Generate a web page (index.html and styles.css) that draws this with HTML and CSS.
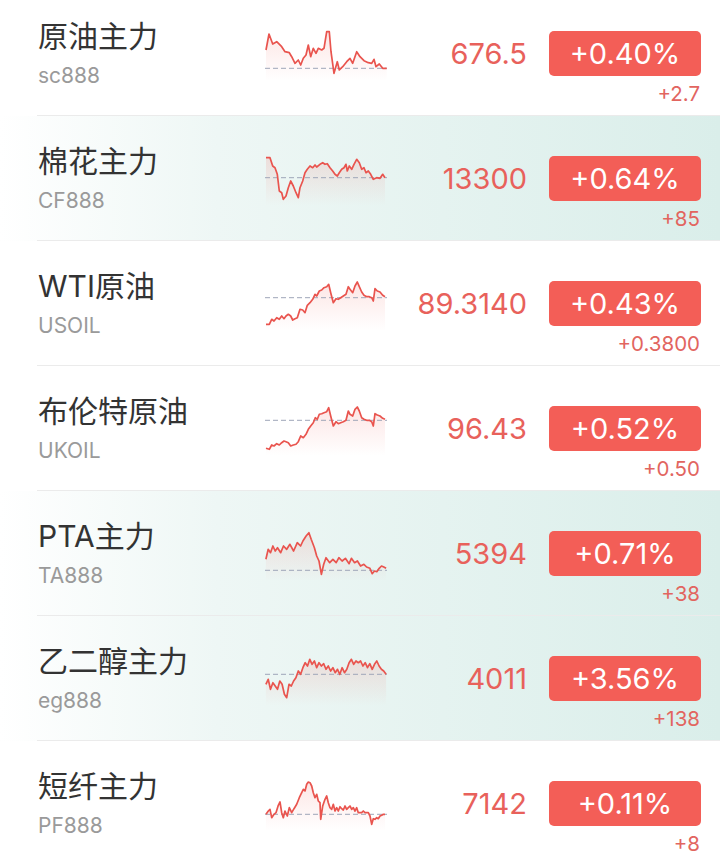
FILE: index.html
```html
<!DOCTYPE html>
<html lang="zh-CN">
<head>
    <meta charset="UTF-8">
    <meta name="viewport" content="width=device-width, initial-scale=1.0">
    <title>行情</title>
    <link rel="stylesheet" href="styles.css">
</head>
<body>
    <!-- shared gradient for the sparkline area -->
    <svg class="defs" width="0" height="0">
        <defs>
            <linearGradient id="spark-fill" x1="0" y1="0" x2="0" y2="1">
                <stop offset="0%" stop-color="#f0605a" stop-opacity="0.16"/>
                <stop offset="100%" stop-color="#f0605a" stop-opacity="0"/>
            </linearGradient>
        </defs>
    </svg>

    <div class="quote-list">
        <div class="quote">
            <div class="quote-inner">
                <div class="quote-title">
                    <div class="quote-name">原油主力</div>
                    <div class="quote-code">sc888</div>
                </div>
                <svg class="spark" width="122" height="55" data-base="42.3" data-points="1,24 4,8 7.7,18 11.7,15.7 16.7,20.7 20,25.7 24.3,26.7 26.7,30.7 30,37.3 33.3,34 35.7,39 38.3,32.3 41,29 43.3,19 45.7,30.7 48.3,22.3 51,27.3 53.3,22.3 56.7,24 59,22.3 61.7,5.7 64.3,5.7 66,25.7 69,47.3 72.3,35.7 74.3,44 77.7,40.7 81.7,35.7 85,32.3 87.7,37.3 91.7,25.7 95,30.7 99,34.7 103.3,36.7 106.7,37.3 109,33.3 111,40.7 114.3,38 117.7,42.3 121.7,42.3"></svg>
                <div class="quote-price">676.5</div>
                <div class="quote-change">
                    <div class="badge">+0.40%</div>
                    <div class="delta">+2.7</div>
                </div>
            </div>
        </div>

        <div class="quote quote-flash">
            <div class="quote-inner">
                <div class="quote-title">
                    <div class="quote-name">棉花主力</div>
                    <div class="quote-code">CF888</div>
                </div>
                <svg class="spark" width="122" height="55" data-base="26.7" data-points="1,6.7 5,6.7 7.7,15 10,16.7 12.3,23.3 14.3,40 16.7,41.7 18.3,48.3 21,45 23.3,36.7 25.7,30 28.3,35 31,41.7 33.3,46.7 35,36.7 37.7,30 40,21.7 42.3,18.3 45,15 47.7,16.7 50,14 51.7,16 55,13.3 57.7,11.7 60,13.3 62.3,12.7 65,16.7 67.7,20 70,23.3 72.3,25 74.3,21.7 76.7,18.3 79,16.7 81,13.3 82.3,20 84.3,15 86.7,18.3 89,13.3 91.7,8.3 94.3,11.7 96.7,18.3 99,16.7 101,21.7 103.3,20 105.7,23.3 108.3,28.3 111.7,26.7 115,27.3 117.7,23.3 120,26.7"></svg>
                <div class="quote-price">13300</div>
                <div class="quote-change">
                    <div class="badge">+0.64%</div>
                    <div class="delta">+85</div>
                </div>
            </div>
        </div>

        <div class="quote">
            <div class="quote-inner">
                <div class="quote-title">
                    <div class="quote-name">WTI原油</div>
                    <div class="quote-code">USOIL</div>
                </div>
                <svg class="spark" width="122" height="55" data-base="21.7" data-points="1,48.3 4.3,48.3 6.7,43.3 9,45 11.7,41.7 14.3,43.3 16.7,40 19,42.7 21,40 23.3,38.3 25.7,40 27.7,44 30,42.7 32.3,41.7 35,33.3 37.7,34 40,36.7 42.3,29.3 45,26.7 47.7,23.3 50,18.3 51.7,20 54.3,15 56.7,14 59,11.7 61.7,10.7 63.7,8.3 65.7,16.7 68.3,26.7 71,22.7 73.3,23.3 75.7,21.7 78.3,20 81,18.3 83.3,10.7 85,13.3 87.7,16.7 90,10 92.3,6 94.3,10.7 96.7,16 99,19.3 101.7,20.7 104.3,20.7 106.7,21.7 108.3,25 110,12.7 112.3,15 115,16 117.7,19.3 120,20.7"></svg>
                <div class="quote-price">89.3140</div>
                <div class="quote-change">
                    <div class="badge">+0.43%</div>
                    <div class="delta">+0.3800</div>
                </div>
            </div>
        </div>

        <div class="quote">
            <div class="quote-inner">
                <div class="quote-title">
                    <div class="quote-name">布伦特原油</div>
                    <div class="quote-code">UKOIL</div>
                </div>
                <svg class="spark" width="122" height="55" data-base="19.3" data-points="1,47.3 4.3,48.3 6.7,44 9,45 11.7,42.7 14.3,44 16.7,41.7 19,40 21,40.7 23.3,41.7 25.7,45 28.3,44 31,43.3 33.3,40.7 35.7,35 38.3,36.7 41,33.3 43.3,28.3 45.7,25 48.3,21.7 50.3,16.7 52.3,18.3 54.3,13.3 56.7,12.7 59,11.7 61.7,10.7 63.7,6.7 65.7,15 68.3,25 71,20.7 73.3,22.7 75.7,21.7 78.3,20.7 81,19.3 83.3,10 85,13.3 87.7,15 90,8.3 92.3,6 94.3,10 96.7,16.7 99,18.3 101.7,19.3 104.3,19.3 106.7,20.7 108.3,25 110,12.7 112.3,14 115,15 117.7,17.3 120,18.3"></svg>
                <div class="quote-price">96.43</div>
                <div class="quote-change">
                    <div class="badge">+0.52%</div>
                    <div class="delta">+0.50</div>
                </div>
            </div>
        </div>

        <div class="quote quote-flash">
            <div class="quote-inner">
                <div class="quote-title">
                    <div class="quote-name">PTA主力</div>
                    <div class="quote-code">TA888</div>
                </div>
                <svg class="spark" width="122" height="55" data-base="44.3" data-points="0.9,33.3 3.2,23.3 5.5,26.7 7.9,20 10.2,25 12.5,21.7 15.7,26.7 18.5,20 21.7,23.3 24.9,18.3 28.6,25 32.3,16.7 35.6,20 37.9,15 41.1,10 43.9,6.7 46.2,13.3 49.4,21.7 51.7,30 54,35 56.4,48.3 58.7,38.3 61,31.7 64.7,36.7 67.9,33.3 71.2,36.7 73.9,31.7 77.1,35 80.4,32.3 84.1,37.7 86.4,32.3 89.6,36.7 92.4,35 95.6,40 98.9,38.3 101.6,41 104.9,42.3 107.2,47.7 109.5,45 111.8,45.7 114.2,42.3 116.5,40 118.8,41 121.1,42.3"></svg>
                <div class="quote-price">5394</div>
                <div class="quote-change">
                    <div class="badge">+0.71%</div>
                    <div class="delta">+38</div>
                </div>
            </div>
        </div>

        <div class="quote quote-flash">
            <div class="quote-inner">
                <div class="quote-title">
                    <div class="quote-name">乙二醇主力</div>
                    <div class="quote-code">eg888</div>
                </div>
                <svg class="spark" width="122" height="55" data-base="23.3" data-points="0.9,33.3 3.2,28.3 5.5,38.3 7.9,31.7 10.2,35 12.5,38.3 14.8,30 17.1,33.3 19.4,43.3 21.7,46.7 24,33.3 26.3,35 28.6,30 30.9,26.7 33.3,20 35.6,23.3 37.9,16.7 40.2,11.7 42.5,15 44.8,8.3 47.1,13.3 49.4,10 51.7,16.7 54,11.7 56.4,15 58.7,12.7 61,18.3 63.3,15 65.6,20 67.9,16.7 70.2,21.7 72.5,18.3 74.8,23.3 77.1,16.7 79.5,21.7 81.8,18.3 84.1,11.7 86.4,8.3 88.7,13.3 91,10 93.3,11.7 95.6,10 97.9,15 100.2,11.7 102.5,16.7 104.8,12.7 107.2,18.3 109.5,13.3 111.8,10 114.1,15 116.4,18.3 118.7,20 121.1,23.3"></svg>
                <div class="quote-price">4011</div>
                <div class="quote-change">
                    <div class="badge">+3.56%</div>
                    <div class="delta">+138</div>
                </div>
            </div>
        </div>

        <div class="quote">
            <div class="quote-inner">
                <div class="quote-title">
                    <div class="quote-name">短纤主力</div>
                    <div class="quote-code">PF888</div>
                </div>
                <svg class="spark" width="122" height="55" data-base="38.3" data-points="1,38.3 3.3,35 5,33.3 6.7,41.7 9,38.3 11,36.7 13.3,29.3 15,26 16.7,36.7 18.3,41.7 20,35 22.3,40 24.3,31.7 26.7,36.7 29,32.7 31.7,28.3 34.3,21.7 36.7,16.7 38.3,13.3 40,15 41.7,8.3 43.3,6 45,6.7 46.7,10 48.3,16.7 50,21.7 51.7,18.3 53.3,25 55,26.7 55.7,43.3 57.7,30 60,23.3 61.7,20 63.3,26.7 65,31.7 66.7,33.3 68.3,28.3 70,35 71.7,31.7 73.3,35 75,30.7 76.7,32.7 78.3,34 80,30 81.7,33.3 83.3,31.7 85,30 86.7,33.3 88.3,31.7 90,35 91.7,31.7 93.3,36.7 95,36.7 96.7,36.7 98.3,35 100,36.7 101.7,36.7 103.3,36.7 105,40 106.7,48.3 108.3,42.7 110,43.3 111.7,41.7 113.3,42.7 115,40 116.7,39.3 118.3,38.3 120,38.3"></svg>
                <div class="quote-price">7142</div>
                <div class="quote-change">
                    <div class="badge">+0.11%</div>
                    <div class="delta">+8</div>
                </div>
            </div>
        </div>
    </div>

    <script>
        // build each sparkline from its data-points
        const NS = 'http://www.w3.org/2000/svg';

        document.querySelectorAll('.spark').forEach(function (svg) {
            const points = svg.dataset.points;
            const base = svg.dataset.base;
            const pts = points.split(' ');
            const first = pts[0].split(',')[0];
            const last = pts[pts.length - 1].split(',')[0];

            const area = document.createElementNS(NS, 'polygon');
            area.setAttribute('class', 'spark-area');
            area.setAttribute('points', `${first},55 ${points} ${last},55`);
            svg.appendChild(area);

            const line = document.createElementNS(NS, 'line');
            line.setAttribute('class', 'spark-base');
            line.setAttribute('x1', 0);
            line.setAttribute('x2', 122);
            line.setAttribute('y1', base);
            line.setAttribute('y2', base);
            svg.appendChild(line);

            const path = document.createElementNS(NS, 'polyline');
            path.setAttribute('class', 'spark-line');
            path.setAttribute('points', points);
            svg.appendChild(path);
        });
    </script>
</body>
</html>
```

FILE: styles.css
```css
/* General Styles */
body {
    margin: 0;
    padding: 0;
    background: #FFFFFF;
    font-family: Inter, "Noto Sans CJK SC", sans-serif;
    color: #333333;
    overflow: hidden;
}

.defs {
    position: absolute;
    width: 0;
    height: 0;
}

/* Quote list */
.quote-list {
    margin-top: -9px;
}

.quote {
    height: 125px;
}

.quote-flash {
    background: linear-gradient(90deg, #FFFFFF 0%, #EEF7F5 30%, #DAEEEA 100%);
}

.quote-inner {
    display: flex;
    align-items: flex-start;
    height: 125px;
    box-sizing: border-box;
    margin-left: 37px;
    padding: 0 19px 0 1px;
    border-bottom: 1px solid #EBEBEB;
}

.quote-title {
    width: 227px;
    flex-shrink: 0;
}

.quote-name {
    margin-top: 28px;
    font-size: 30px;
    line-height: 34px;
    color: #333333;
    white-space: nowrap;
}

.quote-code {
    margin-top: 12px;
    font-size: 21px;
    line-height: 22px;
    color: #9A9A9A;
}

/* Sparkline */
.spark {
    flex-shrink: 0;
    margin-top: 35px;
    overflow: visible;
}

.spark-area {
    fill: url(#spark-fill);
    stroke: none;
}

.spark-base {
    stroke: #9EA6B8;
    stroke-width: 1;
    stroke-dasharray: 5 3;
}

.spark-line {
    fill: none;
    stroke: #E9544E;
    stroke-width: 1.7;
    stroke-linejoin: round;
}

/* Price and change */
.quote-price {
    flex: 1;
    margin: 40px 22px 0 0;
    text-align: right;
    font-size: 29px;
    line-height: 45px;
    color: #E8615B;
    white-space: nowrap;
}

.quote-change {
    width: 152px;
    flex-shrink: 0;
    margin-top: 40px;
}

.badge {
    height: 45px;
    line-height: 45px;
    border-radius: 5px;
    background: #F35E57;
    color: #FFFFFF;
    text-align: center;
    font-size: 29px;
}

.delta {
    margin-top: 7px;
    padding-right: 1px;
    text-align: right;
    font-size: 20.5px;
    line-height: 22px;
    color: #E2655F;
}
```
